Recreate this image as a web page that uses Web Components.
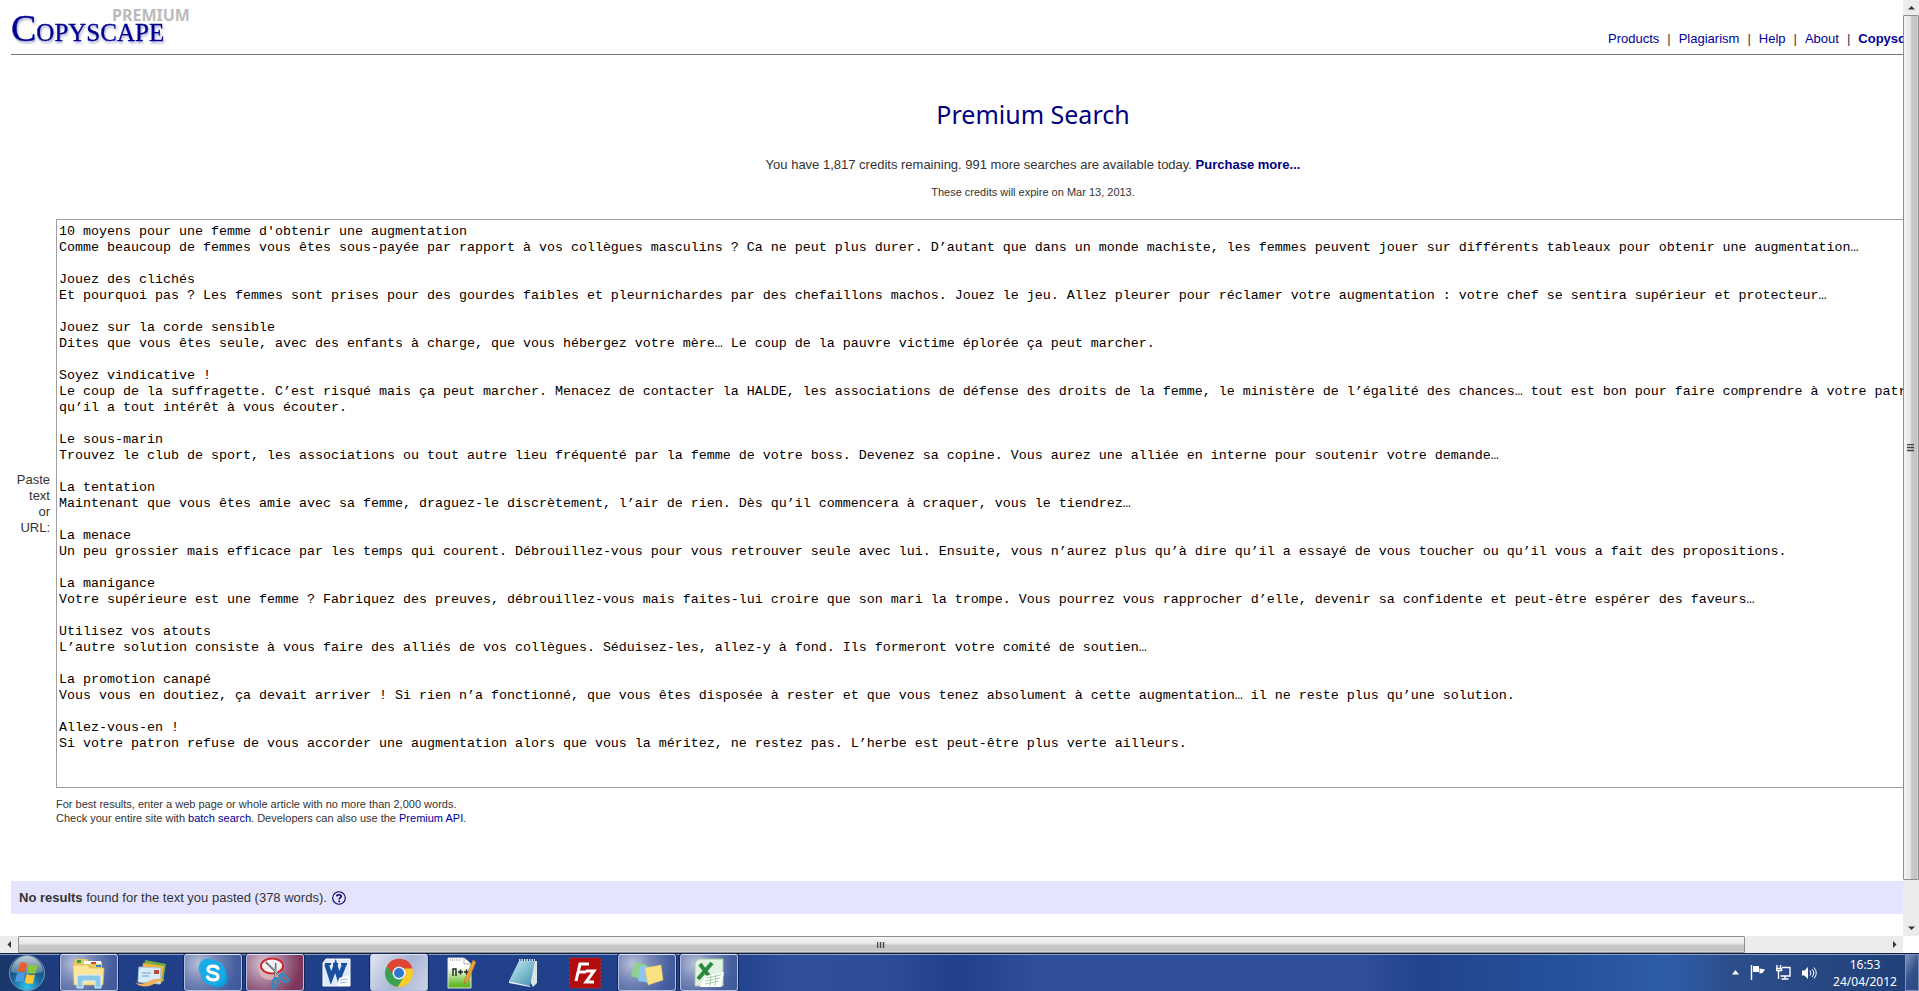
<!DOCTYPE html>
<html lang="en">
<head>
<meta charset="utf-8">
<title>Copyscape Premium</title>
<style>
html, body { margin: 0; height: 100%; }
body { background: #fff; color: #333; font: 13px/16px "Liberation Sans", Arial, sans-serif; overflow: hidden; }
</style>
</head>
<body>
<desk-screen>
  <site-page>
    <site-header></site-header>
    <search-intro></search-intro>
    <search-form></search-form>
    <result-bar></result-bar>
  </site-page>
  <scroll-bar slot="v" axis="v"></scroll-bar>
  <scroll-bar slot="h" axis="h"></scroll-bar>
  <task-bar slot="tasks"></task-bar>
</desk-screen>
<script>
const define = (name, html) => customElements.define(name, class extends HTMLElement {
  constructor() {
    super();
    this.attachShadow({ mode: 'open' }).innerHTML = html;
  }
});

define('desk-screen', `
<style>
:host { display: grid; height: 100vh; grid-template: minmax(0, 1fr) 17px 38px / minmax(0, 1fr) 16px; background: #fff; }
.view { overflow: hidden; min-width: 0; }
.tasks { grid-column: 1 / 3; }
</style>
<div class="view"><slot></slot></div>
<slot name="v"></slot>
<slot name="h"></slot><div></div>
<div class="tasks"><slot name="tasks"></slot></div>`);

define('site-page', `
<style>
:host { display: block; width: calc(100% + 163px); box-sizing: border-box; padding: 0 11px; }
</style>
<slot></slot>`);

define('site-header', `
<style>
:host { display: flex; justify-content: space-between; align-items: flex-end; height: 54px; border-bottom: 1px solid #777; }
.logo { display: block; margin-bottom: 4px; }
nav { width: 447px; display: flex; gap: 8px; padding-bottom: 7px; }
a { color: #000099; text-decoration: none; }
</style>
<a class="logo" href="#" aria-label="Copyscape Premium">
<svg width="184" height="46" viewBox="0 0 184 46" style="display:block">
  <defs><filter id="s" x="-5%" y="-20%" width="120%" height="150%"><feDropShadow dx="1" dy="2" stdDeviation="1.2" flood-color="#000080" flood-opacity=".35"/></filter></defs>
  <g font-family="Noto Sans, sans-serif"><text x="101" y="17" font-size="16" font-weight="700" fill="#bbb">PREMIUM</text></g>
  <g font-family="Liberation Serif, serif" fill="#000090" stroke="#000090" stroke-width=".3" filter="url(#s)"><text x="0" y="37" font-size="38">C<tspan font-size="25">OPYSCAPE</tspan></text></g>
</svg></a>
<nav><a href="#">Products</a><span>|</span><a href="#">Plagiarism</a><span>|</span><a href="#">Help</a><span>|</span><a href="#">About</a><span>|</span><a href="#"><b>Copyscape</b></a></nav>`);

define('search-intro', `
<style>
:host { display: block; text-align: center; padding-top: 42px; }
h1 { margin: 0; font: 25px/34px "Noto Sans", sans-serif; color: #000080; }
p { margin: 0; padding-top: 26px; }
small { display: block; padding: 12px 0 20px; font-size: 11px; line-height: 14px; }
a { color: #000080; text-decoration: none; }
</style>
<h1>Premium Search</h1>
<p>You have 1,817 credits remaining. 991 more searches are available today. <a href="#"><b>Purchase more...</b></a></p>
<small>These credits will expire on Mar 13, 2013.</small>`);

define('search-form', `
<style>
:host { display: block; }
form { display: grid; grid-template-columns: 39px auto; column-gap: 6px; }
label { align-self: center; text-align: right; }
textarea { display: block; justify-self: start; box-sizing: border-box; height: 569px; margin: 0; padding: 4px 2px 0; border: 1px solid #a0a0a0; border-radius: 0; outline: 0; resize: none; overflow: hidden; background: #fff; color: #000; font-family: "Liberation Mono", "Courier New", monospace; line-height: 16px; }
p { grid-column: 2; margin: 0; padding-top: 9px; font-size: 11px; line-height: 14px; }
a { color: #000099; text-decoration: none; }
</style>
<form>
<label for="t">Paste<br>text<br>or<br>URL:</label>
<textarea id="t" cols="236" spellcheck="false">10 moyens pour une femme d'obtenir une augmentation
Comme beaucoup de femmes vous êtes sous-payée par rapport à vos collègues masculins ? Ca ne peut plus durer. D’autant que dans un monde machiste, les femmes peuvent jouer sur différents tableaux pour obtenir une augmentation…

Jouez des clichés
Et pourquoi pas ? Les femmes sont prises pour des gourdes faibles et pleurnichardes par des chefaillons machos. Jouez le jeu. Allez pleurer pour réclamer votre augmentation : votre chef se sentira supérieur et protecteur…

Jouez sur la corde sensible
Dites que vous êtes seule, avec des enfants à charge, que vous hébergez votre mère… Le coup de la pauvre victime éplorée ça peut marcher.

Soyez vindicative !
Le coup de la suffragette. C’est risqué mais ça peut marcher. Menacez de contacter la HALDE, les associations de défense des droits de la femme, le ministère de l’égalité des chances… tout est bon pour faire comprendre à votre patron qu’il a tout intérêt à vous écouter.

Le sous-marin
Trouvez le club de sport, les associations ou tout autre lieu fréquenté par la femme de votre boss. Devenez sa copine. Vous aurez une alliée en interne pour soutenir votre demande…

La tentation
Maintenant que vous êtes amie avec sa femme, draguez-le discrètement, l’air de rien. Dès qu’il commencera à craquer, vous le tiendrez…

La menace
Un peu grossier mais efficace par les temps qui courent. Débrouillez-vous pour vous retrouver seule avec lui. Ensuite, vous n’aurez plus qu’à dire qu’il a essayé de vous toucher ou qu’il vous a fait des propositions.

La manigance
Votre supérieure est une femme ? Fabriquez des preuves, débrouillez-vous mais faites-lui croire que son mari la trompe. Vous pourrez vous rapprocher d’elle, devenir sa confidente et peut-être espérer des faveurs…

Utilisez vos atouts
L’autre solution consiste à vous faire des alliés de vos collègues. Séduisez-les, allez-y à fond. Ils formeront votre comité de soutien…

La promotion canapé
Vous vous en doutiez, ça devait arriver ! Si rien n’a fonctionné, que vous êtes disposée à rester et que vous tenez absolument à cette augmentation… il ne reste plus qu’une solution.

Allez-vous-en !
Si votre patron refuse de vous accorder une augmentation alors que vous la méritez, ne restez pas. L’herbe est peut-être plus verte ailleurs.
</textarea>
<p>For best results, enter a web page or whole article with no more than 2,000 words.<br>Check your entire site with <a href="#">batch search</a>. Developers can also use the <a href="#">Premium API</a>.</p>
</form>`);

define('result-bar', `
<style>
:host { display: flex; align-items: center; gap: 5px; margin-top: 56px; padding: 0 8px; height: 33px; background: #e4e4ff; }
a { display: block; color: #000066; }
</style>
<span><b>No results</b> found for the text you pasted (378 words).</span>
<a href="#" aria-label="Help"><svg width="14" height="14" viewBox="0 0 14 14" style="display:block" fill="none" stroke="currentColor"><circle cx="7" cy="7" r="6.3" stroke-width="1.1"/><path d="M4.8 5.4C4.9 3.2 9.3 3.2 9.2 5.4C9.2 6.7 7.2 6.6 7.2 8.4" stroke-width="1.6"/><path d="M6.3 10.4h1.8" stroke-width="1.6"/></svg></a>`);

customElements.define('scroll-bar', class extends HTMLElement {
  constructor() {
    super();
    this.attachShadow({ mode: 'open' });
  }
  connectedCallback() {
    const v = this.getAttribute('axis') === 'v';
    const arrow = d => `<svg width="7" height="7" viewBox="0 0 7 7"><path fill="#333" d="${d}"/></svg>`;
    this.shadowRoot.innerHTML = `
<style>
:host { display: flex; flex-direction: ${v ? 'column' : 'row'}; min-width: 0; min-height: 0; background: #ececec; }
button { flex: 0 0 ${v ? '15px' : '18px'}; padding: 0; border: 0; background: none; display: grid; place-items: center; }
.track { flex: 1; display: flex; flex-direction: inherit; min-width: 0; min-height: 0; }
.thumb { flex: 0 0 ${v ? '95.5%' : '92.5%'}; box-sizing: border-box; border: 1px solid #8e8f91; border-radius: 1px; display: grid; place-items: center;
  background: linear-gradient(${v ? '90deg' : '180deg'}, #f5f5f5, #e6e6e8 45%, #c8c8cb 55%, #c4c4c6 90%, #ddd); }
</style>
<button aria-label="Back">${arrow(v ? 'M0 5.5L3.5 2L7 5.5Z' : 'M5 0L1.5 3.5L5 7Z')}</button>
<div class="track"><div class="thumb"><svg width="8" height="8" viewBox="0 0 8 8" stroke="#444" stroke-width="1.4"><path d="${v ? 'M0 .5h7M0 3.5h7M0 6.5h7' : 'M.5 1v6M3.5 1v6M6.5 1v6'}"/></svg></div></div>
<button aria-label="Forward">${arrow(v ? 'M0 1.5L3.5 5L7 1.5Z' : 'M2 0L5.5 3.5L2 7Z')}</button>`;
  }
});

define('task-button', `
<style>
:host { display: block; flex: 0 0 58px; height: 37px; }
button { width: 100%; height: 100%; padding: 0; box-sizing: border-box; border: 0; background: none; display: grid; place-items: center; }
:host([open]) button { border: 1px solid #b4c0da; border-top-color: #dde4f0; border-radius: 3px; box-shadow: 0 0 0 1px #12265a; background: radial-gradient(circle at 25% 25%, #b9c2da, #7787b8 35%, #465f9f 75%, #3c5699); }
:host([active]) button { background: linear-gradient(120deg, #dfe4f0, #a9b3d4 55%, #ccd4e8); }
:host([alert]) button { background: radial-gradient(circle at 30% 25%, #d6c6d4, #9d6f8f 45%, #7d3357 80%, #77406e); }
::slotted(svg) { display: block; }
</style>
<button><slot></slot></button>`);

define('task-bar', `
<style>
:host { display: flex; height: 38px; box-sizing: border-box; border-top: 1px solid #13203f; color: #fff; box-shadow: inset 0 1px #86a0c8;
  background: linear-gradient(90deg, #1b3669 0, #203f88 4%, #22418c 38%, #2f4f99 41%, #2d4d97 46%, #20418a 50%, #2f4f98 54%, #2f4f98 71%, #21448c 74%, #26529c 82%, #2f5ca6 87%, #2c4f8c 90%, #203f78); }
.start { flex: 0 0 54px; padding: 0; border: 0; background: none; display: grid; place-items: center; }
.apps { flex: 1; display: flex; gap: 4px; padding-left: 6px; min-width: 0; }
.tray { display: flex; align-items: center; }
.icons { display: flex; align-items: center; gap: 11px; padding-right: 8px; }
.tray svg { display: block; }
time { width: 80px; font: 12px/17px "Noto Sans", sans-serif; text-align: center; }
.peek { width: 14px; height: 37px; box-sizing: border-box; padding: 0; border: 1px solid #7d92bb; background: linear-gradient(120deg, #7d93bd, #35528c 50%, #294782); }
</style>
<button class="start" aria-label="Start"><svg width="38" height="36" viewBox="0 0 38 36">
  <defs><radialGradient id="orb" cx=".5" cy=".9" r=".9"><stop offset="0" stop-color="#2fc5ea"/><stop offset=".45" stop-color="#1a6a9c"/><stop offset="1" stop-color="#16375e"/></radialGradient><linearGradient id="gl" x2="0" y2="1"><stop stop-color="#fff" stop-opacity=".75"/><stop offset="1" stop-color="#fff" stop-opacity=".2"/></linearGradient></defs>
  <circle cx="19" cy="18" r="17.5" fill="url(#orb)" stroke="#6f9cc0"/>
  <path d="M3 17A16 16 0 0 1 35 17Q19 21 3 17Z" fill="url(#gl)"/>
  <path d="M12.500 8Q15.500 6.500 19 8.500L17.500 17Q13.500 15.500 9.500 17Z" fill="#ee5a28"/>
  <path d="M20.500 9.500Q25 11.500 30 9.500L27.500 18Q23 19.500 19 17.500Z" fill="#8cc63e"/>
  <path d="M9 18.500Q13 17 17.200 18.500L15.500 27Q11.500 25.500 7 27Z" fill="#4a9be0"/>
  <path d="M18.500 19Q22.500 21 27 19.500L25 28.500Q20.500 29.500 16.800 27.500Z" fill="#fdc82f"/></svg></button>
<div class="apps">
<task-button open><svg width="34" height="32" viewBox="0 0 34 32"><path d="M2 5L4 2h11l2 3h13v21H2Z" fill="#e9c863"/><path d="M5 3h4v3H5z" fill="#38a33d"/><path d="M12 4h17v3H12z" fill="#fff"/><path d="M19 5h5v2h-5z" fill="#d6402e"/><path d="M24 8h5v2h-5z" fill="#357fce"/><path d="M1 8h14l3 3h14l-1 17H2Z" fill="#fae696" stroke="#d9b954" stroke-width=".6"/><path d="M5 31V20q0-2 2-2h20q2 0 2 2v11h-6v-7H11v7Z" fill="#8cc8ea" stroke="#e4f5fd"/></svg></task-button>
<task-button><svg width="34" height="32" viewBox="0 0 34 32"><path d="M11 3L32 7L29 25L9 20Z" fill="#74ab42"/><path d="M9 6L30 9L27 27L7 22Z" fill="#f2b33d"/><path d="M5 10L27 11L26 27L4 25Z" fill="#d8ecf7" stroke="#a9c9dd"/><path d="M20 13h5v4h-5z" fill="#bd4a34"/><path d="M8 16h9M8 19h7" stroke="#6e9fc4"/><path d="M1 26Q10 28 15 24Q23 20 31 23Q24 24 18 28Q9 32 1 26Z" fill="#efb15d"/></svg></task-button>
<task-button open><svg width="32" height="32" viewBox="0 0 32 32"><circle cx="11" cy="11" r="9.500" fill="#19aee8"/><circle cx="21" cy="21" r="9.500" fill="#0f9fdc"/><circle cx="16" cy="16" r="12.500" fill="#17abe7"/><path d="M21 11.500C19 8 11 8.500 11 12.500C11 17 21 14.500 21 19.500C21 24 12.500 24 10.500 20" fill="none" stroke="#fff" stroke-width="3.200" stroke-linecap="round"/></svg></task-button>
<task-button open alert><svg width="34" height="34" viewBox="0 0 34 34"><ellipse cx="12" cy="15" rx="11" ry="9" fill="#e5b8bc" opacity=".8"/><ellipse cx="14" cy="10" rx="11" ry="7.500" fill="#f6f3f4" stroke="#cc2b36" stroke-width="2"/><path d="M8 6L23 21M18 7L17 23" stroke="#5c6469" stroke-width="2"/><path d="M9 6L22 20M18.500 7L17.500 21" stroke="#d7dde0" stroke-width=".8"/><ellipse cx="17" cy="27" rx="2.500" ry="5" transform="rotate(15 17 27)" fill="none" stroke="#2d8cc0" stroke-width="2.300"/><ellipse cx="26" cy="22" rx="2.500" ry="5" transform="rotate(-50 26 22)" fill="none" stroke="#2d8cc0" stroke-width="2.300"/></svg></task-button>
<task-button><svg width="30" height="30" viewBox="0 0 30 30"><path d="M4 1h24v27H1V5Z" fill="#dfeafa" stroke="#fff"/><path d="M4.500 6L9 20L13.500 8L17 20L22.500 6" fill="none" stroke="#194f9f" stroke-width="4.500"/><path d="M3 6h6M11 6h5M19 6h6" stroke="#194f9f" stroke-width="2"/><path d="M17 20l11-3v11H15Z" fill="#fff"/><path d="M18 22l8-1M18 25l7-1" stroke="#9ab7dc"/></svg></task-button>
<task-button open active><svg width="30" height="30" viewBox="0 0 30 30"><circle cx="15" cy="15" r="14" fill="#fac92f"/><path d="M2.900 8A14 14 0 0 1 28.500 10.500H15L9 19Z" fill="#dd4436"/><path d="M2.900 8A14 14 0 0 0 13.500 29L20.500 18L10 18Z" fill="#38a153"/><circle cx="15" cy="15" r="6.500" fill="#f4f7fa"/><circle cx="15" cy="15" r="5" fill="#2f78cc"/></svg></task-button>
<task-button><svg width="32" height="34" viewBox="0 0 32 34"><defs><linearGradient id="np" x2="0" y2="1"><stop offset=".3" stop-color="#fff"/><stop offset=".9" stop-color="#64bb26"/></linearGradient></defs><path d="M3 2h16l7 6v24H3Z" fill="url(#np)" stroke="#ddd"/><path d="M19 2v6h7" fill="#fff" stroke="#aaa"/><path d="M5 4h12" stroke="#888" stroke-dasharray="1 1"/><path d="M8 20v-7h3v7M13 16h5M15.500 13.500v5M19 16h5M21.500 13.500v5" fill="none" stroke="#222" stroke-width="1.400"/><path d="M28 4l3 2L23 25l-4 3 1-5Z" fill="#e9a43c" stroke="#a96b1d" stroke-width=".6"/></svg></task-button>
<task-button><svg width="32" height="30" viewBox="0 0 32 30"><defs><linearGradient id="nb" x2="1" y2="1"><stop stop-color="#c7edf5"/><stop offset="1" stop-color="#3e8fac"/></linearGradient></defs><path d="M12 3L30 3L30 25L26 29Z" fill="#dbe4e6"/><path d="M12 3L28 3L23 28L2 23Z" fill="url(#nb)"/><path d="M2 23L23 28L23 29L2 25Z" fill="#e9f4f6"/><path d="M12 2h16" stroke="#d5dde0" stroke-width="2" stroke-dasharray="1.500 1"/></svg></task-button>
<task-button><svg width="34" height="32" viewBox="0 0 34 32"><path d="M1.500 1h31v30h-31z" fill="#b30c0c" stroke="#c92222" stroke-dasharray="2 2"/><path d="M8 24L12 7H21M10 15h8M18 14h8L18 25H26" fill="none" stroke="#fff" stroke-width="3"/></svg></task-button>
<task-button open><svg width="34" height="28" viewBox="0 0 34 28"><path d="M5 3L17 6L13 21L1 17Z" fill="#8ed08d"/><path d="M10 7L23 8L21 24L8 22Z" fill="#8fc4ee"/><path d="M15 9L31 6L33 21L18 26Z" fill="#fbe281" stroke="#eecb54" stroke-width=".5"/></svg></task-button>
<task-button open><svg width="32" height="30" viewBox="0 0 32 30"><path d="M5 1h25v27H2V5Z" fill="#e1f1e2" stroke="#9fce9f"/><path d="M7 6L18 21M19 5L5 21" stroke="#2b8a3f" stroke-width="4"/><path d="M12 18L31 14L28 29H7Z" fill="#fff"/><path d="M13 20l15-3M12 23l15-3M12 26l14-3M18 18l-1 10M23 17l-1 11" stroke="#8ec490" stroke-width=".8"/></svg></task-button>
</div>
<div class="tray">
<div class="icons">
<svg width="7" height="5" viewBox="0 0 7 5"><path d="M0 4.500L3.500 0L7 4.500Z" fill="#fff"/></svg>
<svg width="15" height="15" viewBox="0 0 15 15"><path d="M1.500 0v15" stroke="#fff" stroke-width="1.400"/><path d="M3 1h6v6H3ZM9.500 3.500L15 4.500L12.500 8L9.500 8.500Z" fill="#fff"/></svg>
<svg width="15" height="15" viewBox="0 0 15 15" fill="none" stroke="#fff" stroke-width="1.400"><path d="M6 2.500h8v8.500H4.500M5.500 14h7M9 11v3M1 0v3M4.500 0v3M0 3.500h5.500v2H0zM2.500 6v8"/></svg>
<svg width="15" height="14" viewBox="0 0 15 14"><path d="M0 4.500h2.500L6 1v12L2.500 9.500H0Z" fill="#fff"/><path d="M8 4.500q2 2.500 0 5M10 3q3.500 4 0 8M12 1.500q4.500 5.500 0 11" fill="none" stroke="#fff"/></svg>
</div>
<time datetime="2012-04-24T16:53">16:53<br>24/04/2012</time>
<button class="peek" aria-label="Show desktop"></button>
</div>`);
</script>
</body>
</html>
